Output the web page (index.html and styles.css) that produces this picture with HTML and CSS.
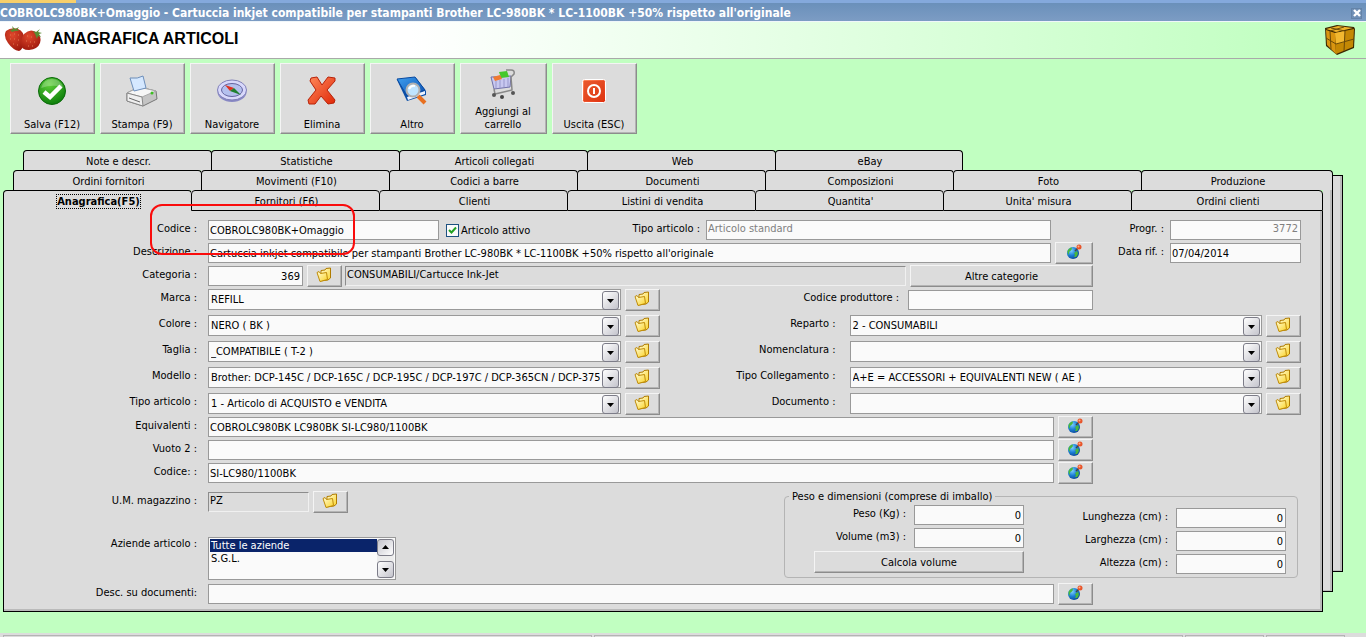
FILE: index.html
```
<!DOCTYPE html>
<html lang="it">
<head>
  <meta charset="UTF-8">
  <title>Anagrafica articoli</title>
  <link rel="stylesheet" href="styles.css">
</head>
<body>

<svg class="defs" width="0" height="0" aria-hidden="true">
  <defs>
    <linearGradient id="gFolder" x1="0" y1="0" x2="1" y2="1"><stop offset="0" stop-color="#fffcd8"/><stop offset="1" stop-color="#fbd428"/></linearGradient>
    <radialGradient id="gGlobe" cx=".35" cy=".3" r=".8"><stop offset="0" stop-color="#7fd0ff"/><stop offset=".5" stop-color="#1b7fd6"/><stop offset="1" stop-color="#0a3f8c"/></radialGradient>
    <radialGradient id="gOk" cx=".4" cy=".25" r=".8"><stop offset="0" stop-color="#5fd03a"/><stop offset="1" stop-color="#087a08"/></radialGradient>
    <linearGradient id="gRed" x1="0" y1="0" x2="1" y2="1"><stop offset="0" stop-color="#ff8a5c"/><stop offset="1" stop-color="#e02808"/></linearGradient>
    <linearGradient id="gBlue" x1="0" y1="0" x2="1" y2="1"><stop offset="0" stop-color="#3fa0f0"/><stop offset="1" stop-color="#0b4fb0"/></linearGradient>
    <radialGradient id="gBerry" cx=".4" cy=".3" r=".8"><stop offset="0" stop-color="#e0482c"/><stop offset="1" stop-color="#98140a"/></radialGradient>
  </defs>
  <symbol id="folder" viewBox="0 0 16 16">
    <path d="M5 5 L5 3.500 L9 3 L10 1.500 L14.500 1 L14.500 11 L12 13 L4 14 Z" fill="url(#gFolder)" stroke="#b07c00"/>
    <path d="M1 5.500 L3 4.500 L4.500 6.500 L10.500 5.500 L11.500 12.500 L4 14.500 Z" fill="url(#gFolder)" stroke="#c08c08"/>
  </symbol>
  <symbol id="globe" viewBox="0 0 16 16">
    <circle cx="7" cy="9" r="6" fill="url(#gGlobe)"/>
    <path d="M1.500 7 Q3 3.500 6 3.500 L5.500 6 L3 8 L3 11 Q1 9 1.500 7 Z M8 9 L11 7 Q13 10 10 13 L8 13 L9 11 Z" fill="#4bb83c"/>
    <path d="M9 7 L12 4" stroke="#444" stroke-width="1.500"/>
    <circle cx="13" cy="3" r="2.500" fill="#e8552b"/>
    <circle cx="12.500" cy="2.500" r="1" fill="#ffb08a"/>
  </symbol>
</svg>

<div class="mdi"><span class="mdi-tab"></span></div>

<div class="titlebar">
  <span>COBROLC980BK+Omaggio - Cartuccia inkjet compatibile per stampanti Brother LC-980BK * LC-1100BK +50% rispetto all'originale</span>
  <button class="close" aria-label="Chiudi">
    <svg width="8" height="8" viewBox="0 0 8 8"><path d="M1 1 L7 7 M7 1 L1 7" stroke="#fff" stroke-width="2.400"/></svg>
  </button>
</div>

<header class="header">
  <svg width="40" height="28" viewBox="0 0 40 28">
    <path d="M2 5 Q7 1 14 3 Q21 6 20 15 Q19 24 15 25 Q9 24 4 17 Q-1 10 2 5 Z" fill="url(#gBerry)"/>
    <path d="M20 8 Q26 2 32 6 Q38 10 36 17 Q34 23 25 24 Q17 24 17 18 Q17 12 20 8 Z" fill="url(#gBerry)"/>
    <path d="M6 4 L9 3 L8 0 L11 3 L15 1 L13 4 L16 5 L11 5 L8 6 Z M29 5 L32 6 L36 3 L34 6 L38 7 L35 8 L37 11 L34 10 L33 13 L31 8 Z" fill="#5b8a32"/>
    <path d="M6 9h1M10 8h1M14 9h1M6 13h1M10 13h1M14 14h1M9 18h1M13 19h1M23 10h1M27 11h1M22 15h1M26 16h1M30 16h1M24 20h1M28 20h1" stroke="#e07850"/>
  </svg>
  <h1>ANAGRAFICA ARTICOLI</h1>
  <svg class="box-icon" width="32" height="32" viewBox="0 0 32 32">
    <path d="M1 4 L13 1 L30 3 L31 5 L30 24 L13 31 L2 22 Z" fill="#3a2600"/>
    <path d="M2 5 L14 2 L29 4 L12 8 Z" fill="#efb22a"/>
    <path d="M2 6 L11 9 L12 30 L3 21 Z" fill="#d99510"/>
    <path d="M11 9 L30 5 L29 23 L12 30 Z" fill="#c48804"/>
    <path d="M11 9 L21 7 L20 18 L12 20 Z" fill="#f2b830"/>
    <path d="M2 14 L12 20 L30 15 M6 7 L7 25 M21 7 L20 27 M7 4 L21 7 M20 3 L6 7" fill="none" stroke="#6b4a08"/>
  </svg>
</header>

<nav class="toolbar">
  <button>
    <svg width="32" height="32" viewBox="0 0 32 32">
      <circle cx="16" cy="16" r="13.500" fill="url(#gOk)" stroke="#0a6a0a"/>
      <path d="M5 13 Q8 4 16 4 Q24 4 27 12 Q16 9 5 13 Z" fill="#fff" opacity=".25"/>
      <path d="M8 17 L14 22 L25 11" fill="none" stroke="#fff" stroke-width="4.500"/>
    </svg>
    Salva (F12)
  </button>
  <button>
    <svg width="32" height="32" viewBox="0 0 32 32">
      <path d="M1 18 L13 12 L30 16 L31 24 L17 31 L1 26 Z" fill="#c4c4c4" stroke="#777"/>
      <path d="M1 18 L13 12 L30 16 L16 22 Z" fill="#f6f6f6" stroke="#aaa"/>
      <path d="M16 22 L17 31 L1 26 L1 18 Z" fill="#efefef" stroke="#888"/>
      <path d="M4 3 Q12 4 17 1 L20 13 L8 16 Z" fill="#d5e8ff" stroke="#6d8fbb"/>
      <path d="M3 23 L14 27" stroke="#666"/><circle cx="26" cy="18" r="1.500" fill="#3cc020"/>
    </svg>
    Stampa (F9)
  </button>
  <button>
    <svg width="32" height="32" viewBox="0 0 32 32">
      <ellipse cx="16" cy="17" rx="14.500" ry="10" fill="#8888c4"/>
      <ellipse cx="16" cy="15" rx="14.500" ry="10" fill="#d8d8fb" stroke="#8080b8"/>
      <ellipse cx="16" cy="15" rx="10.500" ry="6.500" fill="#b4c0ee" stroke="#6464a0"/>
      <path d="M9 10 L18 13 L14 16 Z" fill="#e03020"/><path d="M18 13 L25 20 L14 16 Z" fill="#208030"/>
    </svg>
    Navigatore
  </button>
  <button>
    <svg width="32" height="32" viewBox="0 0 32 32">
      <path d="M5 3 L11 2 L16 10 L22 2 L29 3 L29 6 L21 15 L29 25 L28 28 L22 29 L15 21 L9 29 L3 29 L2 25 L10 15 L4 6 Z" fill="url(#gRed)" stroke="#b82208" stroke-linejoin="round"/>
    </svg>
    Elimina
  </button>
  <button>
    <svg width="32" height="32" viewBox="0 0 32 32">
      <path d="M1 5 L20 3 L30 16 L30 20 L11 26 Z" fill="#0b4fa8"/>
      <path d="M11 22 L29 16 L29 19 L12 25 Z" fill="#eef4ff"/>
      <path d="M1 4 L19 2 L29 15 L11 21 Z" fill="url(#gBlue)" stroke="#0a4aa0"/>
      <path d="M22 21 L29 28" stroke="#e87020" stroke-width="4"/>
      <circle cx="17" cy="15" r="6.500" fill="#bfe4ff" stroke="#b0b0b0" stroke-width="2"/>
      <path d="M13 14 Q15 10 19 11" fill="none" stroke="#fff" stroke-width="2"/>
    </svg>
    Altro
  </button>
  <button class="wide">
    <svg width="32" height="32" viewBox="0 0 32 32">
      <path d="M4 9 L24 8 L23 19 L7 21 Z" fill="#c8c8f0" stroke="#7070a8"/>
      <path d="M12 4 L20 3 L22 9 L14 10 Z" fill="#45c82c"/><path d="M6 9 L13 7 L15 11 L8 13 Z" fill="#f07a30"/>
      <path d="M9 13 V20 M13 12 V20 M17 11 V19 M21 10 V19" stroke="#9898cc"/>
      <path d="M24 9 L27 6 Q28 2 24 2 L19 2 M24 9 L25 22 L8 26 L7 21" fill="none" stroke="#888" stroke-width="1.500"/>
      <circle cx="7" cy="27" r="2" fill="#555"/><circle cx="15" cy="29" r="2" fill="#444"/><circle cx="26" cy="25" r="2" fill="#555"/>
    </svg>
    Aggiungi al carrello
  </button>
  <button>
    <svg width="32" height="32" viewBox="0 0 32 32">
      <rect x="4.500" y="4.500" width="23" height="23" rx="2" fill="url(#gRed)" stroke="#fff"/>
      <rect x="6" y="6" width="20" height="20" fill="#dc3c14" opacity=".6"/>
      <circle cx="16" cy="16" r="6" fill="none" stroke="#fff" stroke-width="2"/>
      <path d="M16 13 V19" stroke="#fff" stroke-width="2"/>
    </svg>
    Uscita (ESC)
  </button>
</nav>

<main class="book">
  <div class="tabs tabs-back">
    <span class="tab"><button>Note e descr.</button></span>
    <span class="tab"><button>Statistiche</button></span>
    <span class="tab"><button>Articoli collegati</button></span>
    <span class="tab"><button>Web</button></span>
    <span class="tab"><button>eBay</button></span>
  </div>
  <div class="tabs tabs-middle">
    <span class="tab"><button>Ordini fornitori</button></span>
    <span class="tab"><button>Movimenti (F10)</button></span>
    <span class="tab"><button>Codici a barre</button></span>
    <span class="tab"><button>Documenti</button></span>
    <span class="tab"><button>Composizioni</button></span>
    <span class="tab"><button>Foto</button></span>
    <span class="tab"><button>Produzione</button></span>
  </div>
  <div class="sheets">
    <div class="sheet-front">
      <div class="tabs tabs-front">
        <span class="tab active"><button><span>Anagrafica(F5)</span></button></span>
        <span class="tab"><button>Fornitori (F6)</button></span>
        <span class="tab"><button>Clienti</button></span>
        <span class="tab"><button>Listini di vendita</button></span>
        <span class="tab"><button>Quantita'</button></span>
        <span class="tab"><button>Unita' misura</button></span>
        <span class="tab"><button>Ordini clienti</button></span>
      </div>

      <form class="panel">
        <div class="highlight"></div>

        <div class="row">
          <label class="name" for="codice">Codice :</label>
          <input class="code" id="codice" type="text" value="COBROLC980BK+Omaggio">
          <input class="check" id="attivo" type="checkbox" checked>
          <label for="attivo">Articolo attivo</label>
          <label class="push" for="standard">Tipo articolo :</label>
          <input class="standard" id="standard" type="text" value="Articolo standard" disabled>
          <div class="side">
            <label for="progr">Progr. :</label>
            <input class="num" id="progr" type="text" value="3772" disabled>
          </div>
        </div>

        <div class="row">
          <label class="name" for="descr">Descrizione :</label>
          <input class="grow" id="descr" type="text" value="Cartuccia inkjet compatibile per stampanti Brother LC-980BK * LC-1100BK +50% rispetto all'originale">
          <button class="btn icon large" type="button" aria-label="Traduci"><svg><use href="#globe"/></svg></button>
          <div class="side">
            <label for="data">Data rif. :</label>
            <input id="data" type="text" value="07/04/2014">
          </div>
        </div>

        <div class="row">
          <label class="name" for="categoria">Categoria :</label>
          <input class="num category" id="categoria" type="text" value="369">
          <button class="btn icon" type="button" aria-label="Scegli categoria"><svg><use href="#folder"/></svg></button>
          <input class="sunken grow" type="text" value="CONSUMABILI/Cartucce Ink-Jet" aria-label="Nome categoria" readonly>
          <button class="btn wide" type="button">Altre categorie</button>
          <div class="side"></div>
        </div>

        <div class="pairs">
          <div class="pair">
            <label class="name" for="marca">Marca :</label>
            <span class="combo"><select id="marca"><option>REFILL</option></select></span>
            <button class="btn icon" type="button" aria-label="Apri marca"><svg><use href="#folder"/></svg></button>
            <div class="maker">
              <label for="produttore">Codice produttore :</label>
              <input id="produttore" type="text">
            </div>
          </div>
          <div class="pair">
            <label class="name" for="colore">Colore :</label>
            <span class="combo"><select id="colore"><option>NERO ( BK )</option></select></span>
            <button class="btn icon" type="button" aria-label="Apri colore"><svg><use href="#folder"/></svg></button>
            <label class="name" for="reparto">Reparto :</label>
            <span class="combo"><select id="reparto"><option>2 - CONSUMABILI</option></select></span>
            <button class="btn icon" type="button" aria-label="Apri reparto"><svg><use href="#folder"/></svg></button>
          </div>
          <div class="pair">
            <label class="name" for="taglia">Taglia :</label>
            <span class="combo"><select id="taglia"><option>_COMPATIBILE ( T-2 )</option></select></span>
            <button class="btn icon" type="button" aria-label="Apri taglia"><svg><use href="#folder"/></svg></button>
            <label class="name" for="nomenclatura">Nomenclatura :</label>
            <span class="combo"><select id="nomenclatura"><option></option></select></span>
            <button class="btn icon" type="button" aria-label="Apri nomenclatura"><svg><use href="#folder"/></svg></button>
          </div>
          <div class="pair">
            <label class="name" for="modello">Modello :</label>
            <span class="combo"><select id="modello"><option>Brother: DCP-145C / DCP-165C / DCP-195C / DCP-197C / DCP-365CN / DCP-375</option></select></span>
            <button class="btn icon" type="button" aria-label="Apri modello"><svg><use href="#folder"/></svg></button>
            <label class="name" for="collegamento">Tipo Collegamento :</label>
            <span class="combo"><select id="collegamento"><option>A+E = ACCESSORI + EQUIVALENTI NEW ( AE )</option></select></span>
            <button class="btn icon" type="button" aria-label="Apri collegamento"><svg><use href="#folder"/></svg></button>
          </div>
          <div class="pair">
            <label class="name" for="tipo">Tipo articolo :</label>
            <span class="combo"><select id="tipo"><option>1 - Articolo di ACQUISTO e VENDITA</option></select></span>
            <button class="btn icon" type="button" aria-label="Apri tipo"><svg><use href="#folder"/></svg></button>
            <label class="name" for="documento">Documento :</label>
            <span class="combo"><select id="documento"><option></option></select></span>
            <button class="btn icon" type="button" aria-label="Apri documento"><svg><use href="#folder"/></svg></button>
          </div>
        </div>

        <div class="row">
          <label class="name" for="equivalenti">Equivalenti :</label>
          <input class="grow" id="equivalenti" type="text" value="COBROLC980BK LC980BK SI-LC980/1100BK">
          <button class="btn icon" type="button" aria-label="Traduci"><svg><use href="#globe"/></svg></button>
          <div class="side"></div>
        </div>
        <div class="row">
          <label class="name" for="vuoto">Vuoto 2 :</label>
          <input class="grow" id="vuoto" type="text">
          <button class="btn icon" type="button" aria-label="Traduci"><svg><use href="#globe"/></svg></button>
          <div class="side"></div>
        </div>
        <div class="row">
          <label class="name" for="codice2">Codice: :</label>
          <input class="grow" id="codice2" type="text" value="SI-LC980/1100BK">
          <button class="btn icon" type="button" aria-label="Traduci"><svg><use href="#globe"/></svg></button>
          <div class="side"></div>
        </div>

        <div class="lower">
          <div class="lower-left">
            <div class="row">
              <label class="name" for="um">U.M. magazzino :</label>
              <input class="sunken unit" id="um" type="text" value="PZ" readonly>
              <button class="btn icon" type="button" aria-label="Scegli unita"><svg><use href="#folder"/></svg></button>
            </div>
            <div class="companies">
              <label class="name" for="aziende">Aziende articolo :</label>
              <div class="listbox">
                <select id="aziende" size="3">
                  <option selected>Tutte le aziende</option>
                  <option>S.G.L.</option>
                </select>
                <div class="scroll">
                  <button class="arrow up" type="button" aria-label="Su"></button>
                  <button class="arrow" type="button" aria-label="Giu"></button>
                </div>
              </div>
            </div>
          </div>

          <fieldset class="size">
            <legend>Peso e dimensioni (comprese di imballo)</legend>
            <div class="size-cols">
              <div class="size-left">
                <div class="field"><label for="peso">Peso (Kg) :</label><input class="num" id="peso" type="text" value="0"></div>
                <div class="field"><label for="volume">Volume (m3) :</label><input class="num" id="volume" type="text" value="0"></div>
                <button class="btn" type="button">Calcola volume</button>
              </div>
              <div class="size-right">
                <div class="field"><label for="lung">Lunghezza (cm) :</label><input class="num" id="lung" type="text" value="0"></div>
                <div class="field"><label for="larg">Larghezza (cm) :</label><input class="num" id="larg" type="text" value="0"></div>
                <div class="field"><label for="alt">Altezza (cm) :</label><input class="num" id="alt" type="text" value="0"></div>
              </div>
            </div>
          </fieldset>
        </div>

        <div class="row">
          <label class="name" for="descdoc">Desc. su documenti:</label>
          <input class="grow" id="descdoc" type="text">
          <button class="btn icon" type="button" aria-label="Traduci"><svg><use href="#globe"/></svg></button>
          <div class="side"></div>
        </div>
      </form>
    </div>
    <div class="sheet-edge"></div>
    <div class="sheet-edge far"></div>
  </div>
</main>

<footer class="status">
  <span></span><span></span><span class="short"></span><span class="short"></span>
</footer>

</body>
</html>
```
FILE: styles.css
```
* {
  box-sizing: border-box;
}

body {
  margin: 0;
  min-height: 100vh;
  display: flex;
  flex-direction: column;
  background: #c1ffc1;
  color: #000;
  font-family: "DejaVu Sans Condensed", "DejaVu Sans", sans-serif;
  font-size: 11px;
  line-height: 13px;
}

button, input, select {
  margin: 0;
  font: inherit;
  color: inherit;
}

.defs {
  position: absolute;
}

/* window frame */
.mdi {
  height: 3px;
  background: #84a9dc;
}

.mdi-tab {
  display: block;
  width: 76px;
  height: 3px;
  background: #f7cf6b;
}

.titlebar {
  display: flex;
  align-items: center;
  justify-content: space-between;
  height: 18px;
  padding: 2px 4px 0 0;
  background: linear-gradient(#6a90ba, #7c9cc4);
  color: #fff;
  font-size: 12px;
  font-weight: bold;
  white-space: nowrap;
}

.close {
  display: flex;
  align-items: center;
  justify-content: center;
  width: 11px;
  height: 11px;
  padding: 0;
  border: 1px solid #6483a8;
  background: #7090b6;
}

.header {
  display: flex;
  align-items: center;
  height: 38px;
  padding: 0 10px 0 4px;
  border-top: 1px solid #f0f6fa;
  border-bottom: 1px solid #a9a9a9;
  background: linear-gradient(90deg, #fff 30%, #c1ffc1 95%);
}

.header h1 {
  flex: 1;
  margin: 0 0 2px 8px;
  font-family: "Liberation Sans", Arial, sans-serif;
  font-size: 16px;
  line-height: 18px;
}

/* toolbar */
.toolbar {
  display: flex;
  gap: 5px;
  padding: 4px 10px 0;
}

.toolbar button {
  display: flex;
  flex-direction: column;
  align-items: center;
  justify-content: flex-end;
  gap: 11px;
  width: 85px;
  height: 71px;
  padding: 0 5px 2px 4px;
  border: 1px solid;
  border-color: #f4f4f4 #8c8c8c #8c8c8c #f4f4f4;
  box-shadow: inset -1px -1px #b4b4b4;
  background: #dcdcdc;
}

.toolbar .wide {
  gap: 5px;
  width: 87px;
}

/* tabs */
.book {
  margin: 16px 23px 0 3px;
}

.tabs {
  display: grid;
  grid-template-columns: repeat(6, 1fr) 192px;
  height: 20px;
}

.tabs-back {
  margin-left: 20px;
}

.tabs-middle {
  margin: 0 10px;
}

.tab {
  display: flex;
  background: #dcdcdc;
}

.tab:first-child, .tab:last-child, .tabs-back .tab {
  background: none;
}

.tab button {
  flex: 1;
  margin-right: -1px;
  padding: 1px 0 0 2px;
  border: 1px solid #000;
  border-bottom: 0;
  border-radius: 4px 4px 0 0;
  background: #dcdcdc;
}

.tab:last-child button {
  margin-right: 0;
}

.tabs-front .tab button {
  border-bottom: 1px solid #000;
}

.tabs-front {
  height: 21px;
}

.tabs-front .active button {
  border-bottom: 0;
  font-weight: bold;
}

.active span {
  outline: 1px dotted #000;
}

.sheets {
  display: flex;
}

.sheet-front {
  flex: 1;
  min-width: 0;
}

.sheet-edge {
  width: 10px;
  margin-bottom: 20px;
  border-right: 1px solid #000;
  border-bottom: 1px solid #000;
  box-shadow: inset -2px -1px #bcbcbc;
  background: #dcdcdc;
}

.sheet-edge.far {
  margin-top: -15px;
  margin-bottom: 40px;
  border-top: 1px solid #000;
}

/* form */
.panel {
  position: relative;
  padding: 9px 21px 4px 0;
  border: 1px solid #000;
  border-top: 0;
  box-shadow: inset -2px -2px #bababa;
  background: #dcdcdc;
}

.highlight {
  position: absolute;
  z-index: 1;
  left: 146px;
  top: -7px;
  width: 205px;
  height: 51px;
  border: 2px solid #fa0c0c;
  border-radius: 12px;
  pointer-events: none;
}

.row {
  display: flex;
  align-items: center;
  height: 20px;
  margin-bottom: 3px;
}

label {
  padding-bottom: 4px;
  white-space: nowrap;
}

.name {
  flex: none;
  width: 204px;
  padding-right: 11px;
  text-align: right;
}

input[type="text"] {
  min-width: 0;
  height: 20px;
  padding: 0 2px 0 1px;
  border: 1px solid #999;
  border-radius: 0;
  background: #fafafa;
}

input[type="text"]:disabled {
  padding-bottom: 3px;
  color: #808080;
}

input.num {
  text-align: right;
}

input.grow {
  flex: 1;
}

input.code {
  width: 231px;
}

input.category {
  width: 95px;
}

input.standard {
  width: 345px;
  margin-right: 42px;
}

input.unit {
  width: 101px;
}

input[type="text"].sunken {
  padding-bottom: 3px;
  border-color: #8c8c8c #f0f0f0 #f0f0f0 #8c8c8c;
  background: #dcdcdc;
}

.check {
  appearance: none;
  width: 13px;
  height: 13px;
  margin: 0 2px 0 7px;
  border: 1px solid #1c5180;
  background: #fafafa url("data:image/svg+xml,%3Csvg xmlns='http://www.w3.org/2000/svg' viewBox='0 0 11 11'%3E%3Cpath d='M2 5L4.500 7.500L9 2.500' fill='none' stroke='%2321a121' stroke-width='2'/%3E%3C/svg%3E");
}

.check + label {
  padding: 0;
}

.push {
  flex: 1;
  padding-right: 6px;
  text-align: right;
}

.side {
  display: flex;
  align-items: center;
  justify-content: flex-end;
  gap: 6px;
  width: 208px;
}

.side input {
  width: 131px;
}

.btn {
  flex: none;
  height: 22px;
  padding: 0 4px;
  border: 1px solid;
  border-color: #f4f4f4 #8c8c8c #8c8c8c #f4f4f4;
  box-shadow: inset -1px -1px #b4b4b4;
  background: #dcdcdc;
}

.btn.icon {
  display: flex;
  align-items: center;
  justify-content: center;
  width: 35px;
  margin-left: 4px;
  padding: 0 5px 2px 4px;
}

.btn.icon.large {
  width: 38px;
}

.btn.wide {
  width: 183px;
  margin-left: 4px;
}

.btn svg {
  width: 16px;
  height: 16px;
}

.btn.icon + .sunken {
  margin-left: 3px;
}

.pairs {
  display: flex;
  flex-direction: column;
  gap: 5px;
  margin-bottom: 3px;
}

.pair {
  display: flex;
  align-items: center;
  height: 21px;
}

.pair .btn + .name {
  width: 190px;
  padding-right: 14px;
}

.combo {
  position: relative;
  flex: 1;
  min-width: 0;
  height: 21px;
}

.combo select {
  display: block;
  appearance: none;
  width: 100%;
  height: 100%;
  padding: 0 20px 0 2px;
  border: 1px solid #999;
  border-radius: 0;
  background: #fafafa;
}

.combo::after, .arrow {
  border: 1px solid #7c7c88;
  border-radius: 3px;
  background: url("data:image/svg+xml,%3Csvg xmlns='http://www.w3.org/2000/svg' width='7' height='4'%3E%3Cpath d='M0 0H7L3.500 4Z'/%3E%3C/svg%3E") center no-repeat, linear-gradient(135deg, #fff, #c4c4cc);
}

.combo::after {
  content: "";
  position: absolute;
  top: 2px;
  right: 2px;
  width: 15px;
  height: 17px;
  pointer-events: none;
}

.maker {
  display: flex;
  flex: 1;
  align-items: center;
  justify-content: flex-end;
  gap: 9px;
  min-width: 0;
  /* same basis as label, combo and button of the rows below */
  flex-basis: 229px;
  padding-right: 208px;
}

.maker input {
  width: 185px;
}

/* lower part */
.lower {
  display: flex;
  justify-content: space-between;
  height: 98px;
  padding-top: 4px;
}

.lower-left {
  padding-top: 2px;
}

.companies {
  display: flex;
  align-items: flex-start;
  margin-top: 25px;
}

.listbox {
  display: flex;
  width: 188px;
  height: 43px;
  padding: 1px;
  border: 1px solid #999;
  background: #fafafa;
}

.listbox select {
  flex: 1;
  padding: 0;
  border: 0;
  border-radius: 0;
  outline: 0;
  overflow: hidden;
  background: #fafafa;
}

.listbox option {
  min-height: 13px;
  padding: 0 1px;
}

.listbox option:checked {
  background: #0a246a linear-gradient(#0a246a, #0a246a);
  color: #fff;
}

.scroll {
  display: flex;
  flex-direction: column;
  justify-content: space-between;
  background: #ececec;
}

.arrow {
  width: 17px;
  height: 17px;
  padding: 0;
}

.arrow.up {
  transform: rotate(180deg);
}

.size {
  width: 514px;
  height: 88px;
  margin: 0 3px 0 0;
  padding: 2px 11px 0 0;
  border: 1px solid #b4b4b4;
  border-radius: 4px;
}

.size legend {
  margin-left: 4px;
  padding: 0 3px;
}

.size-cols {
  display: flex;
  justify-content: space-between;
}

.size-left {
  width: 239px;
  padding-left: 29px;
}

.size-left .btn {
  width: 100%;
}

.size-right {
  padding-top: 3px;
}

.field {
  display: flex;
  align-items: center;
  justify-content: flex-end;
  gap: 8px;
  margin-bottom: 3px;
}

.field input {
  width: 110px;
}

.status {
  display: flex;
  gap: 2px;
  height: 4px;
  margin-top: auto;
  padding: 2px 21px 0 3px;
  background: #dcdcdc;
}

.status span {
  flex: 1;
  border: 1px solid #b4b4b4;
  border-bottom: 0;
}

.status .short {
  flex: none;
  width: 79px;
}
```
